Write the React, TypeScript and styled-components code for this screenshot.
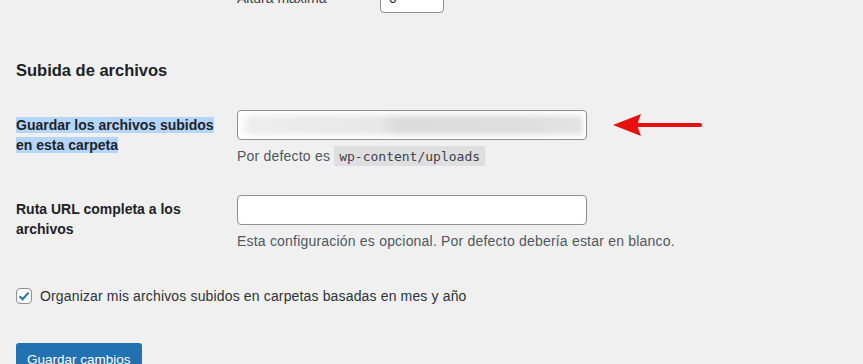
import React from 'react';
import styled, { createGlobalStyle } from 'styled-components';

const GlobalStyle = createGlobalStyle`
  html, body {
    margin: 0;
    padding: 0;
    background: #f0f0f1;
    overflow: hidden;
  }
  body {
    font-family: 'Liberation Sans', Arial, sans-serif;
    color: #1d2327;
    font-size: 14px;
  }
`;

const Page = styled.div`
  width: 863px;
  height: 364px;
  overflow: hidden;
  padding-left: 16px;
  box-sizing: border-box;
`;

const TopRow = styled.div`
  display: flex;
  align-items: center;
  margin-top: -17px;
  padding-left: 221px;
  height: 30px;
`;

const SmallLabel = styled.span`
  width: 143px;
  font-size: 14px;
  color: #3c434a;
`;

const SmallInput = styled.input`
  width: 64px;
  height: 30px;
  box-sizing: border-box;
  border: 1px solid #8c8f94;
  border-radius: 4px;
  background: #fff;
  padding: 0 8px;
  font: inherit;
  color: #2c3338;
`;

const Heading = styled.h2`
  margin: 46px 0 0;
  font-size: 16.5px;
  font-weight: 600;
  line-height: 22px;
  color: #1d2327;
`;

const Row = styled.div<{ $top: number }>`
  display: grid;
  grid-template-columns: 221px 1fr;
  margin-top: ${p => p.$top}px;
`;

const Label = styled.div<{ $pad: number }>`
  font-weight: 600;
  font-size: 14px;
  line-height: 19.5px;
  padding-top: ${p => p.$pad}px;
  color: #1d2327;
`;

const Selected = styled.span`
  background: #b4d5fe;
`;

const Field = styled.div`
  display: flex;
  flex-direction: column;
`;

const InputLine = styled.div`
  display: flex;
  align-items: center;
  gap: 26px;
`;

const TextInput = styled.input<{ $blurred?: boolean }>`
  width: 350px;
  height: 30px;
  box-sizing: border-box;
  border: 1px solid #8c8f94;
  border-radius: 4px;
  padding: 0 8px;
  font: inherit;
  background: ${p =>
    p.$blurred
      ? `linear-gradient(to bottom, rgba(255,255,255,1) 0%, rgba(255,255,255,0) 30%, rgba(255,255,255,0) 70%, rgba(255,255,255,1) 100%),
         linear-gradient(to right, #fff 0%, #ededed 4%, #e8e8e8 40%, #dcdcdc 46%, #dedede 80%, #e4e4e4 98%, #fff 100%)`
      : '#fff'};
`;

const Description = styled.p`
  margin: 6px 0 0;
  font-size: 14px;
  line-height: 20px;
  letter-spacing: 0.2px;
  color: #50575e;
`;

const Code = styled.code`
  font-family: 'DejaVu Sans Mono', 'Liberation Mono', monospace;
  font-size: 13px;
  letter-spacing: 0;
  background: rgba(0, 0, 0, 0.07);
  padding: 3px 5px 2px;
  color: #3c434a;
`;

const CheckRow = styled.label`
  display: flex;
  align-items: center;
  gap: 8px;
  margin-top: 37px;
  font-size: 14px;
  letter-spacing: 0.15px;
  color: #2c3338;
`;

const CheckBox = styled.span`
  width: 16px;
  height: 16px;
  box-sizing: border-box;
  border: 1px solid #8c8f94;
  border-radius: 4px;
  background: #fff;
  display: flex;
  align-items: center;
  justify-content: center;
`;

const Button = styled.button`
  margin-top: 39px;
  height: 32px;
  padding: 0 11px;
  border: none;
  border-radius: 3px;
  background: #2271b1;
  color: #fff;
  font-family: 'Liberation Sans', Arial, sans-serif;
  font-size: 13.5px;
`;

const Arrow = () => (
  <svg width="90" height="26" viewBox="0 0 90 26">
    <line x1="20" y1="13" x2="87" y2="13" stroke="#e8100f" strokeWidth="4" strokeLinecap="round" />
    <polygon points="0,13 28,2 24,13 28,24" fill="#e8100f" />
  </svg>
);

const App: React.FC = () => (
  <>
    <GlobalStyle />
    <Page>
      <TopRow>
        <SmallLabel>Altura máxima</SmallLabel>
        <SmallInput defaultValue="0" />
      </TopRow>

      <Heading>Subida de archivos</Heading>

      <Row $top={29}>
        <Label $pad={6}>
          <Selected>Guardar los archivos subidos</Selected>
          <br />
          <Selected>en esta carpeta</Selected>
        </Label>
        <Field>
          <InputLine>
            <TextInput $blurred />
            <Arrow />
          </InputLine>
          <Description>
            Por defecto es <Code>wp-content/uploads</Code>
          </Description>
        </Field>
      </Row>

      <Row $top={28}>
        <Label $pad={5}>
          Ruta URL completa a los
          <br />
          archivos
        </Label>
        <Field>
          <InputLine>
            <TextInput />
          </InputLine>
          <Description>Esta configuración es opcional. Por defecto debería estar en blanco.</Description>
        </Field>
      </Row>

      <CheckRow>
        <CheckBox>
          <svg width="14" height="14" viewBox="0 0 14 14">
            <path d="M2.5 7.2 L5.6 10.2 L11.6 3.6" fill="none" stroke="#2271b1" strokeWidth="2" />
          </svg>
        </CheckBox>
        Organizar mis archivos subidos en carpetas basadas en mes y año
      </CheckRow>

      <Button>Guardar cambios</Button>
    </Page>
  </>
);

export default App;
